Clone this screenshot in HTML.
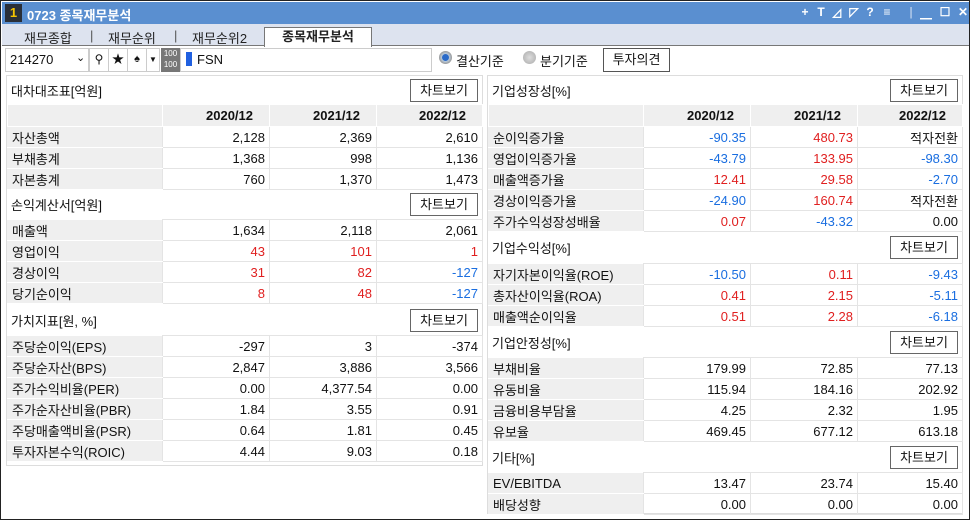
<!DOCTYPE html>
<html><head><meta charset="utf-8"><style>
*{margin:0;padding:0;box-sizing:border-box}
body{width:970px;height:520px;background:#fff;font-family:"Liberation Sans","Noto Sans CJK KR","NanumGothic",sans-serif;font-size:13px;color:#111;position:relative;overflow:hidden}
.win{position:absolute;left:0;top:0;width:970px;height:520px;border:1px solid #222;overflow:hidden}
.title{position:absolute;left:1px;top:1px;width:968px;height:22px;background:#5a8fd0;color:#fff;font-weight:bold;font-size:13px;overflow:hidden}
.title .n{position:absolute;left:3px;top:2px;width:17px;height:18px;background:#2a2f38;color:#f5c400;text-align:center;line-height:18px}
.title .t{position:absolute;left:25px;top:3px}
.title i{position:absolute;top:3px;font-style:normal;font-size:12px;width:12px;text-align:center}
.tabs{position:absolute;left:1px;top:23px;width:968px;height:22px;background:#dde3ef;border-bottom:1px solid #777}
.tab{position:absolute;top:4px;font-size:13px;color:#222}
.tab.on{top:3px;left:262px;width:108px;height:20px;background:#fff;border:1px solid #777;border-bottom:none;text-align:center;font-weight:bold;line-height:17px}
.bar{position:absolute;top:47px;height:24px;border:1px solid #ccc;background:#fff}
.p{position:absolute;border:1px solid #ddd;background:#fff}
table{border-collapse:collapse;table-layout:fixed;position:absolute;left:0}
td{height:21px;border:1px solid #e4e4e4;text-align:right;padding-right:4px;white-space:nowrap}
td.l{background:#efefef;text-align:left;padding-left:4px;border-color:#fff #e4e4e4 #fff #efefef}
tr.h td{background:#efefef;text-align:right;font-weight:bold;padding-right:16px;height:22px;border-color:#fff}
.sec{position:absolute;left:0;height:29px;width:100%}
.sec span{position:absolute;left:4px;top:5px}
.btn{position:absolute;right:4px;top:3px;width:68px;height:23px;border:1px solid #666;background:#fff;text-align:center;line-height:21px}
.r{color:#e02020}.b{color:#1a6ee0}
</style></head><body>
<div class="win">
<div class="title"><div class="n">1</div><div class="t">0723 종목재무분석</div>
<i style="left:797px">+</i><i style="left:813px">T</i><i style="left:829px">⊿</i><i style="left:846px">◸</i><i style="left:862px">?</i><i style="left:879px">≡</i><i style="left:903px;opacity:.5">|</i><i style="left:918px">▁</i><i style="left:937px">☐</i><i style="left:955px">✕</i></div>
<div class="tabs">
<div class="tab" style="left:22px">재무종합</div><div class="tab" style="left:88px;color:#555">|</div>
<div class="tab" style="left:106px">재무순위</div><div class="tab" style="left:172px;color:#555">|</div>
<div class="tab" style="left:190px">재무순위2</div>
<div class="tab on">종목재무분석</div>
</div>
<div class="bar" style="left:4px;width:84px"><span style="position:absolute;left:4px;top:3px">214270</span><span style="position:absolute;left:70px;top:2px;font-size:11px">⌄</span></div>
<div class="bar" style="left:88px;width:20px;text-align:center;line-height:21px;font-size:12px">⚲</div>
<div class="bar" style="left:107px;width:20px;text-align:center;line-height:21px;font-size:12px">★</div>
<div class="bar" style="left:126px;width:20px;text-align:center;line-height:21px;font-size:11px">♠</div>
<div class="bar" style="left:145px;width:14px;text-align:center;line-height:21px;font-size:8px">▼</div>
<div style="position:absolute;left:160px;top:47px;width:19px;height:24px;background:#777;color:#fff;font-size:8px;line-height:11px;text-align:center">100<br>100</div>
<div class="bar" style="left:179px;width:252px"><span style="position:absolute;left:5px;top:3px;width:6px;height:14px;background:#2060e0"></span><span style="position:absolute;left:16px;top:3px">FSN</span></div>
<div class="bar" style="left:434px;width:164px;border:none"><span style="position:absolute;left:4px;top:3px;width:13px;height:13px;border-radius:50%;background:radial-gradient(#2a6ac8 35%,#bcd 40%,#999 70%)"></span><span style="position:absolute;left:21px;top:3px">결산기준</span><span style="position:absolute;left:88px;top:3px;width:13px;height:13px;border-radius:50%;background:radial-gradient(#ddd,#aaa)"></span><span style="position:absolute;left:105px;top:3px">분기기준</span></div>
<div class="bar" style="left:602px;width:67px;border:1px solid #555;text-align:center;line-height:21px">투자의견</div>

<div class="p" style="left:5px;top:74px;width:477px;height:391px">
<div class="sec" style="top:0"><span>대차대조표[억원]</span><div class="btn">차트보기</div></div>
<table style="top:28px;width:475px"><colgroup><col style="width:155px"><col style="width:107px"><col style="width:107px"><col style="width:106px"></colgroup>
<tr class="h"><td class="l"></td><td>2020/12</td><td>2021/12</td><td>2022/12</td></tr>
<tr><td class="l">자산총액</td><td>2,128</td><td>2,369</td><td>2,610</td></tr>
<tr><td class="l">부채총계</td><td>1,368</td><td>998</td><td>1,136</td></tr>
<tr><td class="l">자본총계</td><td>760</td><td>1,370</td><td>1,473</td></tr></table>
<div class="sec" style="top:114px"><span>손익계산서[억원]</span><div class="btn">차트보기</div></div>
<table style="top:143px;width:475px"><colgroup><col style="width:155px"><col style="width:107px"><col style="width:107px"><col style="width:106px"></colgroup>
<tr><td class="l">매출액</td><td>1,634</td><td>2,118</td><td>2,061</td></tr>
<tr><td class="l">영업이익</td><td class="r">43</td><td class="r">101</td><td class="r">1</td></tr>
<tr><td class="l">경상이익</td><td class="r">31</td><td class="r">82</td><td class="b">-127</td></tr>
<tr><td class="l">당기순이익</td><td class="r">8</td><td class="r">48</td><td class="b">-127</td></tr></table>
<div class="sec" style="top:230px"><span>가치지표[원, %]</span><div class="btn">차트보기</div></div>
<table style="top:259px;width:475px"><colgroup><col style="width:155px"><col style="width:107px"><col style="width:107px"><col style="width:106px"></colgroup>
<tr><td class="l">주당순이익(EPS)</td><td>-297</td><td>3</td><td>-374</td></tr>
<tr><td class="l">주당순자산(BPS)</td><td>2,847</td><td>3,886</td><td>3,566</td></tr>
<tr><td class="l">주가수익비율(PER)</td><td>0.00</td><td>4,377.54</td><td>0.00</td></tr>
<tr><td class="l">주가순자산비율(PBR)</td><td>1.84</td><td>3.55</td><td>0.91</td></tr>
<tr><td class="l">주당매출액비율(PSR)</td><td>0.64</td><td>1.81</td><td>0.45</td></tr>
<tr><td class="l">투자자본수익(ROIC)</td><td>4.44</td><td>9.03</td><td>0.18</td></tr></table>
</div>

<div class="p" style="left:486px;top:74px;width:476px;height:439px">
<div class="sec" style="top:0"><span>기업성장성[%]</span><div class="btn">차트보기</div></div>
<table style="top:28px;width:474px"><colgroup><col style="width:155px"><col style="width:107px"><col style="width:107px"><col style="width:105px"></colgroup>
<tr class="h"><td class="l"></td><td>2020/12</td><td>2021/12</td><td>2022/12</td></tr>
<tr><td class="l">순이익증가율</td><td class="b">-90.35</td><td class="r">480.73</td><td>적자전환</td></tr>
<tr><td class="l">영업이익증가율</td><td class="b">-43.79</td><td class="r">133.95</td><td class="b">-98.30</td></tr>
<tr><td class="l">매출액증가율</td><td class="r">12.41</td><td class="r">29.58</td><td class="b">-2.70</td></tr>
<tr><td class="l">경상이익증가율</td><td class="b">-24.90</td><td class="r">160.74</td><td>적자전환</td></tr>
<tr><td class="l">주가수익성장성배율</td><td class="r">0.07</td><td class="b">-43.32</td><td>0.00</td></tr></table>
<div class="sec" style="top:157px"><span>기업수익성[%]</span><div class="btn">차트보기</div></div>
<table style="top:187px;width:474px"><colgroup><col style="width:155px"><col style="width:107px"><col style="width:107px"><col style="width:105px"></colgroup>
<tr><td class="l">자기자본이익율(ROE)</td><td class="b">-10.50</td><td class="r">0.11</td><td class="b">-9.43</td></tr>
<tr><td class="l">총자산이익율(ROA)</td><td class="r">0.41</td><td class="r">2.15</td><td class="b">-5.11</td></tr>
<tr><td class="l">매출액순이익율</td><td class="r">0.51</td><td class="r">2.28</td><td class="b">-6.18</td></tr></table>
<div class="sec" style="top:252px"><span>기업안정성[%]</span><div class="btn">차트보기</div></div>
<table style="top:281px;width:474px"><colgroup><col style="width:155px"><col style="width:107px"><col style="width:107px"><col style="width:105px"></colgroup>
<tr><td class="l">부채비율</td><td>179.99</td><td>72.85</td><td>77.13</td></tr>
<tr><td class="l">유동비율</td><td>115.94</td><td>184.16</td><td>202.92</td></tr>
<tr><td class="l">금융비용부담율</td><td>4.25</td><td>2.32</td><td>1.95</td></tr>
<tr><td class="l">유보율</td><td>469.45</td><td>677.12</td><td>613.18</td></tr></table>
<div class="sec" style="top:367px"><span>기타[%]</span><div class="btn">차트보기</div></div>
<table style="top:396px;width:474px"><colgroup><col style="width:155px"><col style="width:107px"><col style="width:107px"><col style="width:105px"></colgroup>
<tr><td class="l">EV/EBITDA</td><td>13.47</td><td>23.74</td><td>15.40</td></tr>
<tr><td class="l">배당성향</td><td>0.00</td><td>0.00</td><td>0.00</td></tr></table>
</div>
</div>
</body></html>
